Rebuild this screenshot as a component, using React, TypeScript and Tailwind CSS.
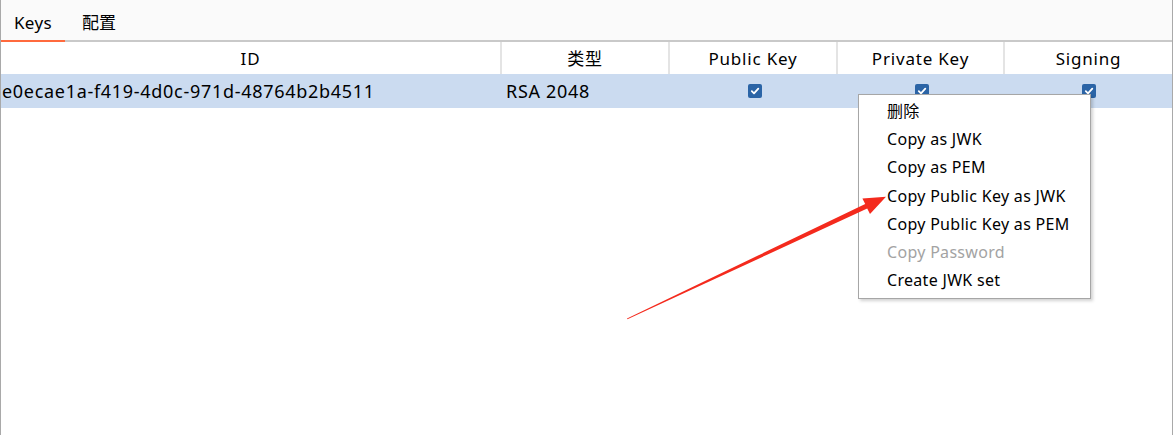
import React from 'react'

const font = { fontFamily: '"Noto Sans", "Noto Sans CJK SC", sans-serif' }

const columns = [
  { label: 'ID', width: 'w-[501px]' },
  { label: '类型', width: 'w-[168px]' },
  { label: 'Public Key', width: 'w-[168px]' },
  { label: 'Private Key', width: 'w-[167px]' },
  { label: 'Signing', width: 'flex-1' },
]

const menuItems = [
  { label: '删除' },
  { label: 'Copy as JWK' },
  { label: 'Copy as PEM' },
  { label: 'Copy Public Key as JWK' },
  { label: 'Copy Public Key as PEM' },
  { label: 'Copy Password', disabled: true },
  { label: 'Create JWK set' },
]

function Check() {
  return (
    <span className="inline-flex w-[14px] h-[14px] rounded-[2px] bg-[#2b64a6] items-center justify-center">
      <svg width="10" height="10" viewBox="0 0 10 10">
        <path d="M1.8 5.2 L4 7.4 L8.3 2.6" fill="none" stroke="white" strokeWidth="1.8" strokeLinecap="round" strokeLinejoin="round" />
      </svg>
    </span>
  )
}

export default function App() {
  return (
    <div className="relative w-[1174px] h-[435px] bg-white overflow-hidden text-black" style={font}>
      <div className="flex flex-col h-full w-[1173px] border-l border-r border-[#a9a9a9]">
        {/* Tabs */}
        <div className="flex items-end h-[42px] bg-[#fafafa] border-b-2 border-[#c9c9c9]">
          <div className="w-[64px] h-full flex items-center justify-center pt-[6px] text-[17px] tracking-[0.4px] border-b-2 border-[#ff6a3d] -mb-[2px] pb-[2px]">Keys</div>
          <div className="w-[68px] h-full flex items-center justify-center pt-[6px] text-[17px]">配置</div>
        </div>

        {/* Header */}
        <div className="flex h-[32px] bg-white">
          {columns.map((c, i) => (
            <div
              key={c.label}
              className={`${c.width} flex items-center justify-center pt-[2px] text-[17px] tracking-[0.8px] ${i < columns.length - 1 ? 'border-r-2 border-[#e4e4e4]' : ''}`}
            >
              {c.label}
            </div>
          ))}
        </div>

        {/* Row */}
        <div className="flex h-[34px] bg-[#cbdbf0] items-center text-[18px] tracking-[0.7px]">
          <div className="w-[501px] pl-[1px]">e0ecae1a-f419-4d0c-971d-48764b2b4511</div>
          <div className="w-[168px] pl-[4px]">RSA 2048</div>
          <div className="w-[168px] flex justify-center pl-[1px]"><Check /></div>
          <div className="w-[167px] flex justify-center pl-[1px]"><Check /></div>
          <div className="flex-1 flex justify-center"><Check /></div>
        </div>
      </div>

      {/* Context menu */}
      <div className="absolute left-[858px] top-[94px] w-[233px] h-[205px] bg-white border border-[#a6a6a6] shadow-[2px_2px_3px_rgba(0,0,0,0.18)] pt-[2px]">
        {menuItems.map((m) => (
          <div
            key={m.label}
            className={`h-[28.2px] flex items-center pl-[28px] text-[16px] tracking-[0.3px] ${m.disabled ? 'text-[#a3a3a3]' : 'text-black'}`}
          >
            {m.label}
          </div>
        ))}
      </div>

      {/* Annotation arrow */}
      <svg className="absolute left-0 top-0 pointer-events-none" width="1174" height="435">
        <polygon
          points="627,318.6 865.2,203.9 862.4,198.6 886,196.8 870,214 867.2,208.6 627.4,319.2"
          fill="#f42a1d"
        />
      </svg>
    </div>
  )
}
